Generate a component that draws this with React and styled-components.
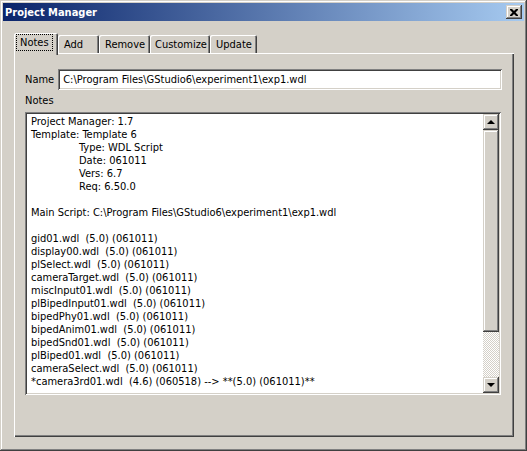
import React from 'react';
import styled, { createGlobalStyle } from 'styled-components';

const GlobalStyle = createGlobalStyle`
  html, body {
    margin: 0;
    padding: 0;
    background: #d4d0c8;
  }
  * {
    box-sizing: border-box;
  }
`;

const FONT = `"DejaVu Sans Condensed", "DejaVu Sans", sans-serif`;

const raised = `
  box-shadow: inset -1px -1px #404040, inset 1px 1px #d4d0c8,
    inset -2px -2px #808080, inset 2px 2px #ffffff;
`;

const sunken = `
  box-shadow: inset 1px 1px #808080, inset -1px -1px #ffffff,
    inset 2px 2px #404040, inset -2px -2px #d4d0c8;
`;

const Window = styled.div`
  width: 527px;
  height: 451px;
  padding: 3px;
  display: flex;
  flex-direction: column;
  background: #d4d0c8;
  font-family: ${FONT};
  font-stretch: condensed;
  font-size: 11px;
  color: #000;
  ${raised}
`;

const TitleBar = styled.div`
  height: 18px;
  display: flex;
  align-items: center;
  justify-content: space-between;
  padding: 0 2px 0 2px;
  background: linear-gradient(to right, #0a246a, #a6caf0);
`;

const Title = styled.span`
  color: #fff;
  font-weight: bold;
  font-size: 11px;
`;

const CloseButton = styled.button`
  width: 16px;
  height: 14px;
  padding: 0;
  border: none;
  background: #d4d0c8;
  display: flex;
  align-items: center;
  justify-content: center;
  ${raised}
`;

const Body = styled.div`
  flex: 1;
  display: flex;
  flex-direction: column;
  padding: 12px 10px 11px 11px;
`;

const TabRow = styled.div`
  display: flex;
  align-items: flex-end;
  height: 20px;
`;

const Tab = styled.div`
  position: relative;
  width: ${(p) => p.w}px;
  height: ${(p) => (p.active ? 22 : 18)}px;
  margin: ${(p) => (p.active ? '0 0 -2px 0' : '0')};
  z-index: ${(p) => (p.active ? 2 : 1)};
  display: flex;
  align-items: center;
  padding-left: ${(p) => p.pad}px;
  padding-bottom: ${(p) => (p.active ? 3 : 0)}px;
  background: #d4d0c8;
  border-top-left-radius: 2px;
  border-top-right-radius: 2px;
  box-shadow: inset 1px 1px #ffffff, inset -1px 0 #404040, inset -2px 0 #808080;
`;

const TabLabel = styled.span`
  padding: 0 2px;
  outline: ${(p) => (p.focused ? '1px dotted #000' : 'none')};
  outline-offset: 1px;
`;

const Panel = styled.div`
  flex: 1;
  display: flex;
  flex-direction: column;
  padding: 16px 12px 42px 11px;
  background: #d4d0c8;
  box-shadow: inset 1px 1px #ffffff, inset -1px -1px #404040,
    inset -2px -2px #808080;
`;

const FieldRow = styled.div`
  display: flex;
  align-items: center;
  gap: 4px;
`;

const Label = styled.label`
  display: block;
  line-height: 13px;
`;

const NotesLabel = styled(Label)`
  margin: 4px 0 5px;
`;

const Input = styled.div`
  flex: 1;
  height: 21px;
  display: flex;
  align-items: center;
  padding: 0 5px;
  background: #fff;
  white-space: nowrap;
  ${sunken}
`;

const NotesBox = styled.div`
  flex: 1;
  display: flex;
  padding: 2px;
  background: #fff;
  min-height: 0;
  margin-right: 1px;
  ${sunken}
`;

const NotesText = styled.div`
  flex: 1;
  overflow: hidden;
  padding: 1px 4px;
  line-height: 13px;
`;

const Line = styled.div`
  height: 13px;
  white-space: pre;
  padding-left: ${(p) => (p.indent ? 48 : 0)}px;
`;

const Scrollbar = styled.div`
  width: 16px;
  display: flex;
  flex-direction: column;
  background: repeating-conic-gradient(#d4d0c8 0 25%, #ffffff 0 50%) 0 0 / 2px
    2px;
`;

const ScrollButton = styled.div`
  height: 16px;
  display: flex;
  align-items: center;
  justify-content: center;
  background: #d4d0c8;
  ${raised}
`;

const Arrow = styled.span`
  width: 0;
  height: 0;
  border-left: 4px solid transparent;
  border-right: 4px solid transparent;
  ${(p) =>
    p.down ? 'border-top: 4px solid #000;' : 'border-bottom: 4px solid #000;'}
`;

const Thumb = styled.div`
  height: 202px;
  background: #d4d0c8;
  ${raised}
`;

const Track = styled.div`
  flex: 1;
`;

const tabs = [
  { label: 'Notes', w: 44, pad: 4, active: true },
  { label: 'Add', w: 41, pad: 4 },
  { label: 'Remove', w: 51, pad: 4 },
  { label: 'Customize', w: 60, pad: 3 },
  { label: 'Update', w: 47, pad: 4 },
];

const path = 'C:\\Program Files\\GStudio6\\experiment1\\exp1.wdl';

const lines = [
  { t: 'Project Manager: 1.7' },
  { t: 'Template: Template 6' },
  { t: 'Type: WDL Script', indent: true },
  { t: 'Date: 061011', indent: true },
  { t: 'Vers: 6.7', indent: true },
  { t: 'Req: 6.50.0', indent: true },
  { t: '' },
  { t: 'Main Script: ' + path },
  { t: '' },
  { t: 'gid01.wdl  (5.0) (061011)' },
  { t: 'display00.wdl  (5.0) (061011)' },
  { t: 'plSelect.wdl  (5.0) (061011)' },
  { t: 'cameraTarget.wdl  (5.0) (061011)' },
  { t: 'miscInput01.wdl  (5.0) (061011)' },
  { t: 'plBipedInput01.wdl  (5.0) (061011)' },
  { t: 'bipedPhy01.wdl  (5.0) (061011)' },
  { t: 'bipedAnim01.wdl  (5.0) (061011)' },
  { t: 'bipedSnd01.wdl  (5.0) (061011)' },
  { t: 'plBiped01.wdl  (5.0) (061011)' },
  { t: 'cameraSelect.wdl  (5.0) (061011)' },
  { t: '*camera3rd01.wdl  (4.6) (060518) --> **(5.0) (061011)**' },
];

export default function App() {
  return (
    <>
      <GlobalStyle />
      <Window>
        <TitleBar>
          <Title>Project Manager</Title>
          <CloseButton aria-label="Close">
            <svg width="8" height="7" viewBox="0 0 8 7">
              <path
                d="M0 0h2l2 2 2-2h2v1L5.5 3.5 8 6v1H6L4 5 2 7H0V6l2.5-2.5L0 1z"
                fill="#000"
              />
            </svg>
          </CloseButton>
        </TitleBar>
        <Body>
          <TabRow>
            {tabs.map((tab) => (
              <Tab key={tab.label} w={tab.w} pad={tab.pad} active={tab.active}>
                <TabLabel focused={tab.active}>{tab.label}</TabLabel>
              </Tab>
            ))}
          </TabRow>
          <Panel>
            <FieldRow>
              <Label>Name</Label>
              <Input>{path}</Input>
            </FieldRow>
            <NotesLabel>Notes</NotesLabel>
            <NotesBox>
              <NotesText>
                {lines.map((l, i) => (
                  <Line key={i} indent={l.indent}>
                    {l.t}
                  </Line>
                ))}
              </NotesText>
              <Scrollbar>
                <ScrollButton>
                  <Arrow />
                </ScrollButton>
                <Thumb />
                <Track />
                <ScrollButton>
                  <Arrow down />
                </ScrollButton>
              </Scrollbar>
            </NotesBox>
          </Panel>
        </Body>
      </Window>
    </>
  );
}
